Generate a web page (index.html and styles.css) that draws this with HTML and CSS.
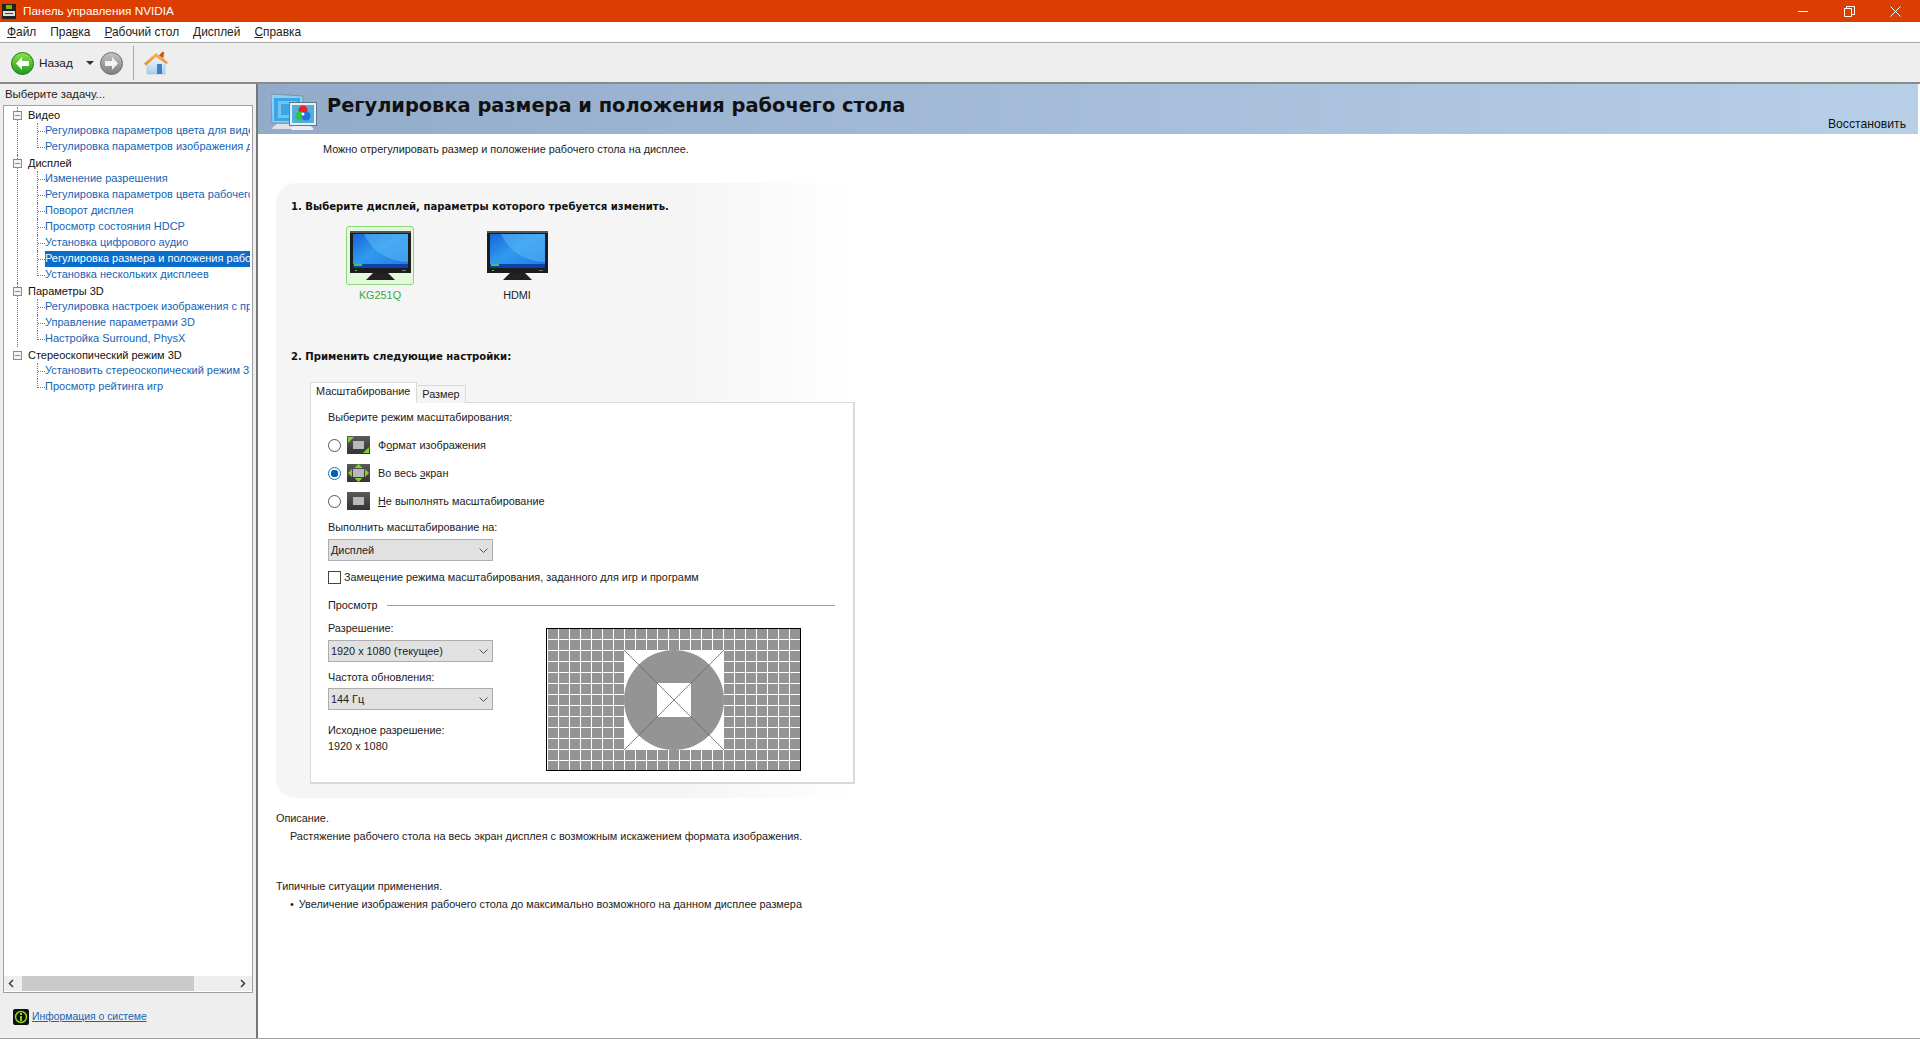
FILE: index.html
```html
<!DOCTYPE html>
<html lang="ru">
<head>
    <meta charset="UTF-8">
    <title>Панель управления NVIDIA</title>
    <link rel="stylesheet" href="styles.css">
</head>
<body>
    <svg class="defs" width="0" height="0">
        <defs>
            <linearGradient id="screen" x1="0" y1="0" x2="1" y2="1">
                <stop offset="0" stop-color="#1a62d8"/>
                <stop offset="0.45" stop-color="#2f9bf0"/>
                <stop offset="1" stop-color="#1c7ae0"/>
            </linearGradient>
            <linearGradient id="green" x1="0" y1="0" x2="0" y2="1">
                <stop offset="0" stop-color="#8fe04c"/>
                <stop offset="1" stop-color="#1d9a1d"/>
            </linearGradient>
            <linearGradient id="grey" x1="0" y1="0" x2="0" y2="1">
                <stop offset="0" stop-color="#c4c4c4"/>
                <stop offset="1" stop-color="#7c7c7c"/>
            </linearGradient>
            <linearGradient id="tile" x1="0" y1="0" x2="0" y2="1">
                <stop offset="0" stop-color="#5a5a5a"/>
                <stop offset="1" stop-color="#333"/>
            </linearGradient>
            <linearGradient id="wall" x1="0" y1="0" x2="0" y2="1">
                <stop offset="0" stop-color="#fbfcfe"/>
                <stop offset="1" stop-color="#a9cdf0"/>
            </linearGradient>
            <linearGradient id="roof" x1="0" y1="0" x2="0" y2="1">
                <stop offset="0" stop-color="#f8b860"/>
                <stop offset="1" stop-color="#ee8a2a"/>
            </linearGradient>
            <symbol id="monitor" viewBox="0 0 61 50">
                <path d="M24 41h13l8 8H16z" fill="#222"/>
                <rect x="0" y="0" width="61" height="42" fill="#1d1d1d"/>
                <rect x="0" y="0" width="61" height="2" fill="#555"/>
                <rect x="3" y="3" width="55" height="34" fill="url(#screen)"/>
                <path d="M14 3h44v28c-18 0-36-10-44-28z" fill="#5cb8f5" opacity=".55"/>
                <rect x="3" y="33" width="55" height="4" fill="#0f3fa8"/>
                <rect x="4" y="33" width="8" height="2" fill="#4fc24f"/>
                <rect x="5" y="39" width="2" height="1" fill="#3ec43e"/>
                <rect x="52" y="39" width="4" height="1" fill="#777"/>
            </symbol>
            <symbol id="tile-base" viewBox="0 0 23 18">
                <rect width="23" height="18" fill="url(#tile)"/>
                <rect x="6" y="5" width="11" height="8" fill="#b8b8b8"/>
            </symbol>
        </defs>
    </svg>

    <header class="titlebar">
        <svg class="app-icon" width="14" height="15" viewBox="0 0 14 15">
            <rect width="14" height="15" fill="#222"/>
            <rect x="4" y="1" width="6" height="4" fill="#76b900"/>
            <rect x="1" y="7" width="12" height="5" fill="#ddd"/>
            <rect x="3" y="9" width="8" height="1" fill="#444"/>
        </svg>
        <span class="title-text">Панель управления NVIDIA</span>
        <div class="window-controls">
            <span class="window-btn">
                <svg width="11" height="11" viewBox="0 0 11 11"><path d="M0 5.5h10" stroke="#fff" fill="none"/></svg>
            </span>
            <span class="window-btn">
                <svg width="11" height="11" viewBox="0 0 11 11"><path d="M.5 2.5h7v8h-7zM2.5 2.5v-2h8v8h-3" stroke="#fff" fill="none"/></svg>
            </span>
            <span class="window-btn">
                <svg width="11" height="11" viewBox="0 0 11 11"><path d="M.5.5l10 10M10.500.5l-10 10" stroke="#fff" fill="none"/></svg>
            </span>
        </div>
    </header>

    <nav class="menubar">
        <span><u>Ф</u>айл</span>
        <span>Пра<u>в</u>ка</span>
        <span><u>Р</u>абочий стол</span>
        <span><u>Д</u>исплей</span>
        <span><u>С</u>правка</span>
    </nav>

    <div class="toolbar">
        <svg class="nav-icon" width="23" height="23" viewBox="0 0 23 23">
            <circle cx="11.500" cy="11.500" r="11" fill="url(#green)" stroke="#1a7f1a"/>
            <path d="M11 5l-6 6.500 6 6.500v-4h7v-5h-7z" fill="#fff"/>
        </svg>
        <span class="back-label">Назад</span>
        <span class="drop-arrow"></span>
        <svg class="nav-icon" width="23" height="23" viewBox="0 0 23 23">
            <circle cx="11.500" cy="11.500" r="11" fill="url(#grey)" stroke="#707070"/>
            <path d="M12 5l6 6.500-6 6.500v-4H5V9h7z" fill="#f2f2f2"/>
        </svg>
        <span class="tool-sep"></span>
        <svg class="home-icon" width="24" height="24" viewBox="0 0 24 24">
            <path d="M3 11l9-7 9 7v12H3z" fill="url(#wall)" stroke="#9fbcd8" stroke-width=".6"/>
            <path d="M0 12.500L12 2l3 2.500 4-4 1.500 1-1 6 4.500 4-1.500 1.500L12 6 2 14.500z" fill="url(#roof)"/>
            <path d="M15 4.500l3.500-4 1.500 1-.8 5z" fill="#c8552a"/>
            <rect x="13" y="13" width="5" height="10" fill="#3f7fc4"/>
        </svg>
    </div>

    <div class="workspace">
        <aside class="sidebar">
            <div class="task-label">Выберите задачу...</div>
            <div class="tree-box">
                <div class="tree-scroll">
                    <div class="tree-group">
                        <div class="group-row"><span class="expander"></span><span class="group-name">Видео</span></div>
                        <ul class="tree-items">
                            <li><span class="elbow"></span><a>Регулировка параметров цвета для видео</a></li>
                            <li class="last"><span class="elbow"></span><a>Регулировка параметров изображения для видео</a></li>
                        </ul>
                    </div>
                    <div class="tree-group">
                        <div class="group-row"><span class="expander"></span><span class="group-name">Дисплей</span></div>
                        <ul class="tree-items">
                            <li><span class="elbow"></span><a>Изменение разрешения</a></li>
                            <li><span class="elbow"></span><a>Регулировка параметров цвета рабочего стола</a></li>
                            <li><span class="elbow"></span><a>Поворот дисплея</a></li>
                            <li><span class="elbow"></span><a>Просмотр состояния HDCP</a></li>
                            <li><span class="elbow"></span><a>Установка цифрового аудио</a></li>
                            <li class="selected"><span class="elbow"></span><a>Регулировка размера и положения рабочего стола</a></li>
                            <li class="last"><span class="elbow"></span><a>Установка нескольких дисплеев</a></li>
                        </ul>
                    </div>
                    <div class="tree-group">
                        <div class="group-row"><span class="expander"></span><span class="group-name">Параметры 3D</span></div>
                        <ul class="tree-items">
                            <li><span class="elbow"></span><a>Регулировка настроек изображения с просмотром</a></li>
                            <li><span class="elbow"></span><a>Управление параметрами 3D</a></li>
                            <li class="last"><span class="elbow"></span><a>Настройка Surround, PhysX</a></li>
                        </ul>
                    </div>
                    <div class="tree-group end">
                        <div class="group-row"><span class="expander"></span><span class="group-name">Стереоскопический режим 3D</span></div>
                        <ul class="tree-items">
                            <li><span class="elbow"></span><a>Установить стереоскопический режим 3D</a></li>
                            <li class="last"><span class="elbow"></span><a>Просмотр рейтинга игр</a></li>
                        </ul>
                    </div>
                </div>
                <div class="hscroll">
                    <svg width="15" height="15" viewBox="0 0 15 15"><path d="M9 4L5.500 7.500 9 11" stroke="#444" stroke-width="1.600" fill="none"/></svg>
                    <div class="hscroll-track"><div class="hscroll-thumb"></div></div>
                    <svg width="15" height="15" viewBox="0 0 15 15"><path d="M6 4l3.500 3.500L6 11" stroke="#444" stroke-width="1.600" fill="none"/></svg>
                </div>
            </div>
            <div class="sys-info">
                <svg width="16" height="16" viewBox="0 0 16 16">
                    <rect width="16" height="16" rx="2" fill="#111"/>
                    <circle cx="8" cy="8" r="5.500" fill="none" stroke="#8fd020" stroke-width="1.500"/>
                    <rect x="7" y="4" width="2" height="2" fill="#8fd020"/>
                    <rect x="7" y="7" width="2" height="5" fill="#8fd020"/>
                </svg>
                <a>Информация о системе</a>
            </div>
        </aside>

        <main class="content">
            <div class="banner">
                <svg class="banner-icon" width="46" height="37" viewBox="0 0 46 37">
                    <path d="M6 31h18l5 5H2c-1 0-1-1 0-2z" fill="#dfe3e7"/>
                    <path d="M0 1l32 2v27L1 30z" fill="#8fd0f2" stroke="#6f8ca5" stroke-width=".8"/>
                    <rect x="3" y="5" width="26" height="23" fill="#3aa6ea"/>
                    <rect x="7" y="8" width="19" height="17" fill="#74c3f0"/>
                    <rect x="10" y="11" width="13" height="11" fill="#3aa6ea"/>
                    <path d="M24 32h14l4 3c1 1 0 2-1 2H21c-1 0-1-1 0-2z" fill="#eceff1"/>
                    <rect x="18.500" y="9.500" width="27" height="23" fill="#e6eff5" stroke="#5f7a92"/>
                    <rect x="21" y="12" width="22" height="18" fill="#4fb0dc"/>
                    <circle cx="32" cy="17" r="4.500" fill="#e8242a"/>
                    <circle cx="29" cy="23" r="4.500" fill="#33c24a"/>
                    <circle cx="35" cy="23" r="4.500" fill="#2a6fe0"/>
                    <circle cx="32" cy="21" r="1.500" fill="#fff"/>
                </svg>
                <h1>Регулировка размера и положения рабочего стола</h1>
                <a class="restore">Восстановить</a>
            </div>

            <p class="intro">Можно отрегулировать размер и положение рабочего стола на дисплее.</p>

            <section class="card">
                <h2>1. Выберите дисплей, параметры которого требуется изменить.</h2>
                <div class="displays">
                    <div class="display active">
                        <div class="display-box"><svg width="61" height="50"><use href="#monitor"/></svg></div>
                        <div class="display-name">KG251Q</div>
                    </div>
                    <div class="display">
                        <div class="display-box"><svg width="61" height="50"><use href="#monitor"/></svg></div>
                        <div class="display-name">HDMI</div>
                    </div>
                </div>

                <h2 class="second">2. Применить следующие настройки:</h2>
                <div class="tabs">
                    <span class="tab current">Масштабирование</span>
                    <span class="tab">Размер</span>
                </div>
                <div class="tab-panel">
                    <div class="line">Выберите режим масштабирования:</div>
                    <div class="modes">
                        <div class="mode">
                            <span class="radio"></span>
                            <svg width="23" height="18" viewBox="0 0 23 18">
                                <use href="#tile-base" width="23" height="18"/>
                                <path d="M1 1h6L1 7zM22 17h-6l6-6z" fill="#86d02e"/>
                            </svg>
                            <span>Ф<u>о</u>рмат изображения</span>
                        </div>
                        <div class="mode">
                            <span class="radio checked"></span>
                            <svg width="23" height="18" viewBox="0 0 23 18">
                                <use href="#tile-base" width="23" height="18"/>
                                <path d="M11.500 0l4 4h-8zM11.500 18l4-4h-8zM1 9l4-4v8zM22 9l-4-4v8z" fill="#86d02e"/>
                            </svg>
                            <span>Во весь <u>э</u>кран</span>
                        </div>
                        <div class="mode">
                            <span class="radio"></span>
                            <svg width="23" height="18"><use href="#tile-base" width="23" height="18"/></svg>
                            <span><u>Н</u>е выполнять масштабирование</span>
                        </div>
                    </div>
                    <div class="line scale-on">Выполнить масштабирование на:</div>
                    <div class="combo top-5">
                        <span>Дисплей</span>
                        <svg width="9" height="5" viewBox="0 0 9 5"><path d="M.5.500l4 4 4-4" stroke="#555" fill="none"/></svg>
                    </div>
                    <div class="override">
                        <span class="checkbox"></span>
                        <span>Замещение режима масштабирования, заданного для игр и программ</span>
                    </div>
                    <div class="preview-head"><span>Просмотр</span><span class="rule"></span></div>
                    <div class="preview-row">
                        <div class="preview-controls">
                            <div class="line">Разрешение:</div>
                            <div class="combo top-5">
                                <span>1920 x 1080 (текущее)</span>
                                <svg width="9" height="5" viewBox="0 0 9 5"><path d="M.5.500l4 4 4-4" stroke="#555" fill="none"/></svg>
                            </div>
                            <div class="line rate">Частота обновления:</div>
                            <div class="combo top-4">
                                <span>144 Гц</span>
                                <svg width="9" height="5" viewBox="0 0 9 5"><path d="M.5.500l4 4 4-4" stroke="#555" fill="none"/></svg>
                            </div>
                            <div class="line native">Исходное разрешение:</div>
                            <div class="line native-value">1920 x 1080</div>
                        </div>
                        <svg class="preview" width="255" height="143" viewBox="0 0 255 143">
                            <defs>
                                <pattern id="cells" x="1" y="0" width="11" height="11" patternUnits="userSpaceOnUse">
                                    <rect width="11" height="11" fill="#fff"/>
                                    <rect x="1" y="1" width="10" height="10" fill="#949494"/>
                                </pattern>
                            </defs>
                            <rect width="255" height="143" fill="url(#cells)"/>
                            <rect x="78" y="22" width="100" height="100" fill="#fff"/>
                            <circle cx="128" cy="72" r="50" fill="#949494"/>
                            <rect x="111" y="55" width="34" height="34" fill="#fff"/>
                            <path d="M78 22l100 100M178 22L78 122" stroke="#666" stroke-width=".8"/>
                            <rect x=".5" y=".5" width="254" height="142" fill="none" stroke="#000"/>
                        </svg>
                    </div>
                </div>
            </section>

            <div class="line note-title">Описание.</div>
            <div class="line note-text">Растяжение рабочего стола на весь экран дисплея с возможным искажением формата изображения.</div>
            <div class="line note-title usage">Типичные ситуации применения.</div>
            <div class="line note-text"><span class="bullet">•</span>Увеличение изображения рабочего стола до максимально возможного на данном дисплее размера</div>
        </main>
    </div>
</body>
</html>
```

FILE: styles.css
```css
html, body {
    margin: 0;
    padding: 0;
}
body {
    width: 1920px;
    height: 1040px;
    overflow: hidden;
    display: flex;
    flex-direction: column;
    background: #fff;
    color: #222;
    font-family: "Liberation Sans", "Noto Sans", sans-serif;
    font-size: 10.85px;
    line-height: 14px;
}
a {
    color: inherit;
}
.defs {
    position: absolute;
}
.titlebar {
    height: 22px;
    flex: none;
    display: flex;
    align-items: center;
    padding-left: 2px;
    padding-right: 2px;
    background: #dc3d00;
    color: #fff;
}
.title-text {
    margin-left: 7px;
    font-size: 11.8px;
}
.window-controls {
    margin-left: auto;
    display: flex;
}
.window-btn {
    width: 46px;
    height: 22px;
    display: flex;
    align-items: center;
    justify-content: center;
}
.menubar {
    height: 21px;
    flex: none;
    display: flex;
    align-items: center;
    gap: 14px;
    padding-left: 7px;
    box-sizing: border-box;
    border-bottom: 1px solid #a6a6a6;
    background: #fff;
    font-size: 11.9px;
}
.toolbar {
    height: 41px;
    flex: none;
    box-sizing: border-box;
    display: flex;
    align-items: center;
    padding-left: 11px;
    padding-top: 1px;
    background: #eee;
    border-bottom: 2px solid #8a8a8a;
    font-size: 11.8px;
}
.back-label {
    margin-left: 5px;
}
.drop-arrow {
    margin-left: 13px;
    width: 0;
    height: 0;
    border-left: 4px solid transparent;
    border-right: 4px solid transparent;
    border-top: 4px solid #333;
}
.drop-arrow + .nav-icon {
    margin-left: 6px;
}
.tool-sep {
    width: 1px;
    height: 34px;
    margin-left: 10px;
    background: #a8a8a8;
}
.home-icon {
    margin-left: 10px;
}
.workspace {
    height: 954px;
    flex: none;
    display: flex;
    border-bottom: 1px solid #a0a0a0;
}
.sidebar {
    width: 256px;
    flex: none;
    display: flex;
    flex-direction: column;
    background: #eee;
    border-right: 2px solid #777;
}
.task-label {
    margin: 3px 0 4px 5px;
    font-size: 11.4px;
}
.tree-box {
    height: 888px;
    margin-left: 3px;
    width: 250px;
    box-sizing: border-box;
    border: 1px solid #a0a0a0;
    background: #fff;
    display: flex;
    flex-direction: column;
    font-size: 11px;
}
.tree-scroll {
    flex: 1;
    overflow: hidden;
    padding-left: 13px;
    padding-top: 1px;
}
.tree-group {
    margin-left: 0;
    border-left: 1px dotted #777;
}
.tree-group.end {
    border-left-color: transparent;
}
.group-row {
    height: 16px;
    display: flex;
    align-items: center;
    color: #111;
}
.expander {
    width: 9px;
    height: 9px;
    margin-left: -5px;
    box-sizing: border-box;
    border: 1px solid #8a8a8a;
    background: linear-gradient(#8a8a8a, #8a8a8a) center / 5px 1px no-repeat, #f4f4f4;
}
.group-name {
    margin-left: 6px;
    white-space: nowrap;
}
.tree-items {
    list-style: none;
    margin: 0 0 0 19px;
    padding: 0;
}
.tree-items li {
    height: 16px;
    display: flex;
    white-space: nowrap;
    color: #1464b4;
}
.elbow {
    flex: none;
    width: 8px;
    height: 16px;
    box-sizing: border-box;
    border-left: 1px dotted #777;
    background: repeating-linear-gradient(90deg, #777 0 1px, transparent 1px 2px) 0 8px / 100% 1px no-repeat;
}
.tree-items li.last .elbow {
    height: 9px;
}
.tree-items a {
    display: block;
    width: 205px;
    overflow: hidden;
    line-height: 14px;
}
.tree-items li.selected a {
    background: #0a6dcc;
    color: #fff;
}
.hscroll {
    height: 15px;
    margin-bottom: 1px;
    padding-right: 2px;
    display: flex;
    background: #eee;
}
.hscroll-track {
    flex: 1;
}
.hscroll-thumb {
    width: 172px;
    height: 15px;
    margin-left: 3px;
    background: #c9c9c9;
}
.sys-info {
    display: flex;
    align-items: center;
    gap: 3px;
    margin: 16px 0 0 13px;
}
.sys-info a {
    color: #1464b4;
    font-size: 10.4px;
    text-decoration: underline;
}
.content {
    flex: 1;
    min-width: 0;
}
.banner {
    height: 50px;
    margin-right: 2px;
    display: flex;
    align-items: flex-start;
    background: linear-gradient(90deg, #92abc9, #b8cfe8);
    color: #111;
}
.banner-icon {
    margin: 9px 0 0 13px;
}
.banner h1 {
    margin: 10px 0 0 10px;
    font-family: "DejaVu Sans", sans-serif;
    font-size: 19.4px;
    line-height: 24px;
    font-weight: bold;
}
.restore {
    margin: 33px 12px 0 auto;
    font-size: 12.2px;
}
.intro {
    margin: 8px 0 0 65px;
}
.card {
    width: 579px;
    margin: 27px 0 0 18px;
    padding: 16px 0 14px 15px;
    box-sizing: border-box;
    border-radius: 20px 0 0 20px;
    background: linear-gradient(90deg, #f5f5f5 70%, #fff);
}
.card h2 {
    margin: 0 0 -2px;
    font-family: "DejaVu Sans", sans-serif;
    font-size: 10.1px;
    line-height: 16px;
    font-weight: bold;
    color: #111;
}
.card h2.second {
    margin-top: 47px;
}
.displays {
    display: flex;
    gap: 69px;
    margin: 13px 0 0 55px;
}
.display {
    width: 68px;
    text-align: center;
}
.display-box {
    height: 59px;
    box-sizing: border-box;
    border: 1px solid transparent;
    border-radius: 3px;
    display: flex;
    align-items: center;
    justify-content: center;
}
.display.active .display-box {
    border-color: #8ed67e;
    background: #e3f9dc;
}
.display-name {
    margin-top: 3px;
}
.display.active .display-name {
    color: #3aa83a;
}
.tabs {
    display: flex;
    align-items: flex-end;
    margin: 19px 0 0 19px;
    height: 21px;
    position: relative;
    z-index: 1;
}
.tab {
    height: 18px;
    padding: 0 5px;
    box-sizing: border-box;
    border: 1px solid #d9d9d9;
    border-bottom: 0;
    border-left: 0;
    background: #f4f4f4;
    line-height: 16px;
}
.tab.current {
    height: 21px;
    padding: 0 6px 0 5px;
    border-left: 1px solid #d9d9d9;
    background: #fff;
    line-height: 17px;
}
.tab-panel {
    width: 545px;
    height: 382px;
    margin: -1px 0 0 19px;
    padding: 7px 0 0 17px;
    box-sizing: border-box;
    border: 1px solid #d9d9d9;
    border-right-width: 2px;
    border-bottom-width: 2px;
    background: #fff;
}
.modes {
    display: flex;
    flex-direction: column;
    gap: 10px;
    margin-top: 12px;
}
.mode {
    height: 18px;
    display: flex;
    align-items: center;
}
.radio {
    width: 13px;
    height: 13px;
    box-sizing: border-box;
    border: 1px solid #555;
    border-radius: 50%;
    background: #fff;
    margin-right: 6px;
}
.radio.checked {
    border-color: #0a6dcc;
    background: radial-gradient(circle, #0a5fb4 0 3.5px, #fff 4px);
}
.mode svg {
    margin-right: 8px;
}
.scale-on {
    margin-top: 10px;
}
.combo {
    width: 165px;
    height: 22px;
    box-sizing: border-box;
    padding: 0 4px 0 2px;
    display: flex;
    align-items: center;
    justify-content: space-between;
    border: 1px solid #adadad;
    background: #e1e1e1;
}
.top-5 {
    margin-top: 5px;
}
.top-4 {
    margin-top: 4px;
}
.override {
    display: flex;
    align-items: center;
    gap: 3px;
    margin-top: 9px;
    height: 14px;
}
.checkbox {
    width: 13px;
    height: 13px;
    box-sizing: border-box;
    border: 1px solid #444;
    background: #fff;
}
.preview-head {
    display: flex;
    align-items: center;
    gap: 9px;
    width: 507px;
    margin-top: 14px;
}
.rule {
    flex: 1;
    height: 1px;
    background: #a0a0a0;
}
.preview-row {
    display: flex;
    margin-top: 9px;
}
.preview-controls {
    width: 165px;
}
.rate {
    margin-top: 8px;
}
.native {
    margin-top: 13px;
}
.native-value {
    margin-top: 2px;
}
.preview {
    margin: 7px 0 0 53px;
}
.note-title {
    margin: 13px 0 0 18px;
}
.note-text {
    margin: 4px 0 0 32px;
}
.usage {
    margin-top: 36px;
}
.bullet {
    margin-right: 5px;
}
```
